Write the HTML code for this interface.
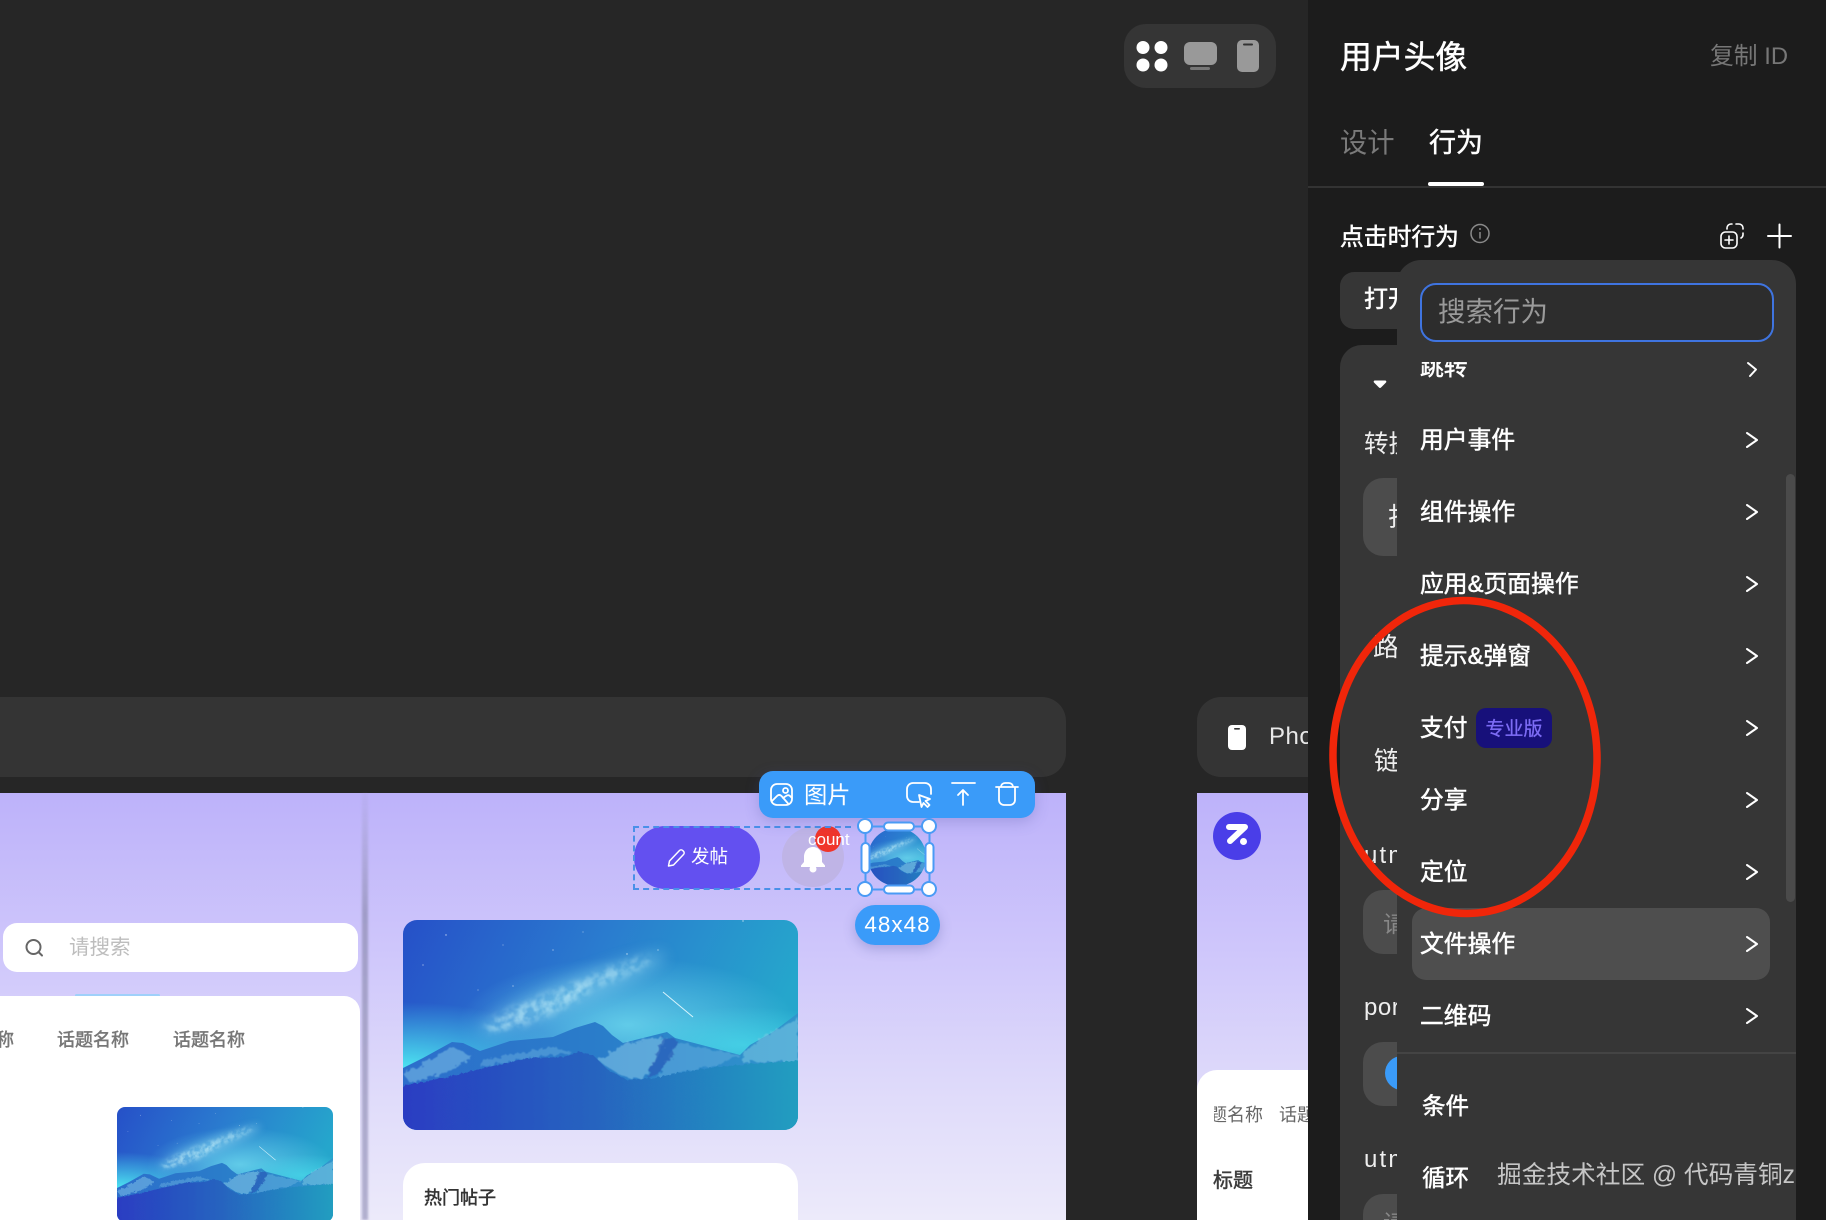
<!DOCTYPE html>
<html lang="zh-CN">
<head>
<meta charset="utf-8">
<title>用户头像</title>
<style>
*{box-sizing:border-box;margin:0;padding:0}
html,body{width:1826px;height:1220px;overflow:hidden;background:#262626}
body{position:relative;font-family:"Liberation Sans","Noto Sans CJK SC",sans-serif;color:#fff}
.a{position:absolute}
.t{position:absolute;white-space:nowrap;line-height:40px;height:40px}
.m{-webkit-text-stroke:.5px currentColor}
.row{position:absolute;left:23px;font-size:23.8px;line-height:40px;height:40px;white-space:nowrap;-webkit-text-stroke:.5px #fff}
svg{position:absolute;left:0;top:0;display:block}
</style>
</head>
<body>
<svg width="0" height="0" style="position:absolute">
<defs>
<linearGradient id="sky" x1="0" y1="0" x2="1" y2=".25"><stop offset="0" stop-color="#2650c8"/><stop offset=".5" stop-color="#2a7ccf"/><stop offset="1" stop-color="#25a6cc"/></linearGradient>
<radialGradient id="gl" cx="0" cy="150" r="170" gradientUnits="userSpaceOnUse" gradientTransform="translate(0 90) scale(1 .4)"><stop offset="0" stop-color="#4ee8f2"/><stop offset="1" stop-color="#4ee8f2" stop-opacity="0"/></radialGradient>
<radialGradient id="gc" cx="225" cy="105" r="170" gradientUnits="userSpaceOnUse" gradientTransform="translate(0 63) scale(1 .4)"><stop offset="0" stop-color="#6fdcef" stop-opacity=".8"/><stop offset="1" stop-color="#6fdcef" stop-opacity="0"/></radialGradient>
<radialGradient id="gr" cx="340" cy="125" r="120" gradientUnits="userSpaceOnUse" gradientTransform="translate(0 85) scale(1 .32)"><stop offset="0" stop-color="#4adcec" stop-opacity=".7"/><stop offset="1" stop-color="#4adcec" stop-opacity="0"/></radialGradient>
<linearGradient id="mt" x1="0" y1="0" x2="1" y2="0"><stop offset="0" stop-color="#2c6ecb"/><stop offset=".5" stop-color="#2a7dca"/><stop offset="1" stop-color="#3095cc"/></linearGradient>
<linearGradient id="tr" x1="0" y1="0" x2="1" y2="0"><stop offset="0" stop-color="#2a3cc2"/><stop offset=".5" stop-color="#2565bf"/><stop offset=".8" stop-color="#2488c0"/><stop offset="1" stop-color="#229fc0"/></linearGradient>
<filter id="b6" x="-30%" y="-80%" width="160%" height="260%"><feGaussianBlur stdDeviation="7"/></filter>
<filter id="cloud" x="-20%" y="-80%" width="140%" height="260%"><feGaussianBlur in="SourceGraphic" stdDeviation="4" result="s"/><feTurbulence type="fractalNoise" baseFrequency=".11" numOctaves="3" seed="8" result="n"/><feColorMatrix in="n" type="matrix" values="0 0 0 0 1 0 0 0 0 1 0 0 0 0 1 3 0 0 0 -1" result="a"/><feComposite in="s" in2="a" operator="in"/><feGaussianBlur stdDeviation=".6"/></filter>
<filter id="rough" x="-5%" y="-5%" width="110%" height="110%"><feTurbulence type="fractalNoise" baseFrequency=".3" numOctaves="2" seed="3" result="n"/><feDisplacementMap in="SourceGraphic" in2="n" scale="3.5"/></filter>
<filter id="rough2" x="-5%" y="-20%" width="110%" height="140%"><feTurbulence type="fractalNoise" baseFrequency=".18" numOctaves="3" seed="5" result="n"/><feDisplacementMap in="SourceGraphic" in2="n" scale="7"/><feGaussianBlur stdDeviation=".5"/></filter>
<symbol id="scene" viewBox="0 0 395 210" preserveAspectRatio="none">
<rect width="395" height="210" fill="url(#sky)"/>
<rect width="395" height="210" fill="url(#gl)"/>
<rect width="395" height="210" fill="url(#gc)"/>
<rect width="395" height="210" fill="url(#gr)"/>
<g transform="rotate(-22 170 71)">
<ellipse cx="170" cy="72" rx="100" ry="14" fill="#8fd8f0" opacity=".4" filter="url(#b6)"/>
<ellipse cx="130" cy="74" rx="55" ry="10" fill="#b8e6f5" opacity=".65" filter="url(#cloud)"/>
<ellipse cx="205" cy="70" rx="50" ry="6" fill="#b8e6f5" opacity=".6" filter="url(#cloud)"/>
</g>
<path d="M260 72L290 97" stroke="#e8fbff" stroke-width="1" opacity=".9"/>
<g fill="#fff" opacity=".7"><circle cx="43" cy="15" r=".7"/><circle cx="20" cy="45" r=".6"/><circle cx="224" cy="34" r=".7"/><circle cx="110" cy="66" r=".6"/><circle cx="255" cy="30" r=".6"/><circle cx="340" cy="1" r=".7"/><circle cx="150" cy="30" r=".6"/><circle cx="75" cy="70" r=".5"/><circle cx="180" cy="12" r=".5"/><circle cx="100" cy="25" r=".5"/></g>
<path d="M0 148L20 138 49 122 60 123 77 131 107 121 150 117 172 108 192 102 200 106 209 115 220 123 240 118 264 112 272 118 337 135 347 125 370 112 395 93V210H0Z" fill="url(#mt)"/>
<g filter="url(#rough2)">
<path d="M0 153L27 140 50 127 70 137 44 152 7 163Z" fill="#8fd0ea" opacity=".45"/>
<path d="M80 140L150 127 170 133 127 138 77 147Z" fill="#8fd0ea" opacity=".3"/>
<path d="M194 140L224 123 264 117 257 133 240 160 220 157Z" fill="#9ad6ee" opacity=".45"/>
<path d="M274 123L337 135 310 147 254 158Z" fill="#6ab4e0" opacity=".45"/>
<path d="M260 117L274 120 270 137 250 157 244 157Z" fill="#2a5cb8" opacity=".7"/>
<path d="M340 133L360 117 395 97V142H339Z" fill="#7cc8e4" opacity=".55"/>
</g>
<path d="M-5 167L44 157 90 146 127 138 160 137 177 132 190 135 205 150 224 160 250 158 280 152 310 147 350 144 400 140V215H-5Z" fill="url(#tr)" filter="url(#rough)"/>
</symbol>
<clipPath id="av"><circle cx="897" cy="857" r="29"/></clipPath>
</defs>
</svg>

<!-- canvas top toolbar -->
<div class="a" style="left:1124px;top:24px;width:152px;height:64px;border-radius:22px;background:#353535"></div>

<!-- left header bar -->
<div class="a" style="left:-30px;top:697px;width:1096px;height:80px;border-radius:24px;background:#343434"></div>
<!-- left preview -->
<div class="a" style="left:0;top:793px;width:1066px;height:427px;background:linear-gradient(180deg,#bdb2fa 0%,#cfc7fb 38%,#e0dcfa 72%,#eceafa 100%)"></div>
<div class="a" style="left:362px;top:793px;width:6px;height:427px;filter:blur(1px);background:linear-gradient(180deg,rgba(160,156,205,.1) 0%,#a09cc8 28%,#a9a6cb 60%,#b2b0cf 100%)"></div>

<!-- left phone -->
<div class="a" style="left:3px;top:923px;width:355px;height:49px;border-radius:14px;background:#fff"></div>
<div class="t" style="left:69px;top:928px;font-size:20.5px;color:#bdbdbd">请搜索</div>
<div class="a" style="left:75px;top:994px;width:85px;height:3px;background:#9fd0fa;border-radius:2px"></div>
<div class="a" style="left:-30px;top:996px;width:390px;height:240px;border-radius:16px;background:#fff"></div>
<div class="t m" style="left:-58px;top:1020px;font-size:18px;color:#777">话题名称</div>
<div class="t m" style="left:57px;top:1020px;font-size:18px;color:#777">话题名称</div>
<div class="t m" style="left:173px;top:1020px;font-size:18px;color:#777">话题名称</div>
<svg style="left:117px;top:1107px;border-radius:8px" width="216" height="115"><use href="#scene" width="216" height="115"/></svg>

<!-- main image -->
<svg style="left:403px;top:920px;border-radius:14px" width="395" height="210"><use href="#scene" width="395" height="210"/></svg>
<div class="a" style="left:403px;top:1163px;width:395px;height:80px;border-radius:22px;background:#fff"></div>
<div class="t m" style="left:424px;top:1178px;font-size:18px;color:#333">热门帖子</div>

<!-- post button & bell -->
<div class="a" style="left:634px;top:826px;width:126px;height:63px;border-radius:32px;background:#6350f0"></div>
<div class="t" style="left:691px;top:837px;font-size:18.5px;color:#fff">发帖</div>
<div class="a" style="left:782px;top:827px;width:62px;height:60px;border-radius:50%;background:#bfb4e6"></div>
<div class="a" style="left:815px;top:826px;width:26px;height:26px;border-radius:50%;background:#f0352a"></div>
<div class="t" style="left:808px;top:820px;font-size:17px;color:#fff">count</div>
<div class="a" style="left:633px;top:826px;width:218px;height:64px;border:2px dashed #4a90e8;border-right:0"></div>

<!-- blue toolbar -->
<div class="a" style="left:759px;top:771px;width:276px;height:47px;border-radius:14px;background:#3a9bf9;box-shadow:0 4px 14px rgba(70,80,160,.25)"></div>
<div class="t" style="left:804px;top:775px;font-size:23.3px;color:#fff">图片</div>
<div class="a" style="left:855px;top:905px;width:85px;height:40px;border-radius:20px;background:#3a9bf9;box-shadow:0 4px 12px rgba(70,80,160,.3)"></div>
<div class="t" style="left:855px;top:905px;width:85px;text-align:center;font-size:22.5px;letter-spacing:1px;color:#fff">48x48</div>

<!-- right phone -->
<div class="a" style="left:1197px;top:697px;width:140px;height:80px;border-radius:24px;background:#343434"></div>
<div class="t" style="left:1269px;top:717px;font-size:24px;letter-spacing:.5px;color:#e8e8e8">Phone</div>
<div class="a" style="left:1197px;top:793px;width:111px;height:427px;background:linear-gradient(180deg,#bdb2fa 0%,#cfc7fb 38%,#e0dcfa 72%,#eceafa 100%)"></div>
<div class="a" style="left:1197px;top:1070px;width:130px;height:170px;border-radius:20px 0 0 0;background:#fff"></div>
<div style="position:absolute;left:1214px;top:1095px;width:94px;height:40px;overflow:hidden">
<div class="t" style="left:-23px;top:0;font-size:18px;color:#666">话题名称</div>
<div class="t" style="left:65px;top:0;font-size:18px;color:#666">话题</div>
</div>
<div class="t m" style="left:1213px;top:1161px;font-size:20px;color:#3c3c3c">标题</div>

<!-- right panel -->
<div class="a" style="left:1308px;top:0;width:518px;height:1220px;background:#1c1c1c"></div>
<div class="t m" style="left:1340px;top:37px;font-size:31.8px;color:#fff">用户头像</div>
<div class="t" style="left:1710px;top:37px;font-size:23.8px;color:#777">复制 ID</div>
<div class="t" style="left:1340px;top:123px;font-size:27.3px;color:#7a7a7a">设计</div>
<div class="t m" style="left:1429px;top:123px;font-size:27px;color:#fff">行为</div>
<div class="a" style="left:1308px;top:186px;width:518px;height:2px;background:#333"></div>
<div class="a" style="left:1428px;top:182px;width:56px;height:4px;border-radius:2px;background:#fff"></div>
<div class="t m" style="left:1340px;top:218px;font-size:23.8px;color:#fff">点击时行为</div>

<!-- behind section -->
<div class="a" style="left:1340px;top:272px;width:100px;height:57px;border-radius:14px;background:#363636"></div>
<div class="t m" style="left:1364px;top:280px;font-size:24px;color:#fff">打开</div>
<div class="a" style="left:1340px;top:345px;width:456px;height:880px;border-radius:22px 22px 0 0;background:#363636"></div>
<div class="t" style="left:1364px;top:425px;font-size:24.5px;color:#eee">转换</div>
<div class="a" style="left:1363px;top:478px;width:60px;height:78px;border-radius:20px;background:#4c4c4c"></div>
<div class="t" style="left:1388px;top:497px;font-size:26px;color:#eee">打</div>
<div class="t" style="left:1373px;top:627px;font-size:26px;color:#eee">路</div>
<div class="t" style="left:1374px;top:741px;font-size:26px;color:#eee">链</div>
<div class="t" style="left:1364px;top:836px;font-size:24px;letter-spacing:2.2px;color:#eee">utm</div>
<div class="a" style="left:1363px;top:890px;width:60px;height:64px;border-radius:20px;background:#4c4c4c"></div>
<div class="t" style="left:1383px;top:904px;font-size:23px;color:#888">请</div>
<div class="t" style="left:1364px;top:988px;font-size:24px;letter-spacing:.5px;color:#eee">port</div>
<div class="a" style="left:1363px;top:1042px;width:60px;height:64px;border-radius:20px;background:#4c4c4c"></div>
<div class="a" style="left:1385px;top:1056px;width:34px;height:34px;border-radius:50%;background:#3a9bf9"></div>
<div class="t" style="left:1364px;top:1140px;font-size:24px;letter-spacing:2.2px;color:#eee">utm</div>
<div class="a" style="left:1363px;top:1194px;width:60px;height:64px;border-radius:20px;background:#4c4c4c"></div>
<div class="t" style="left:1383px;top:1203px;font-size:23px;color:#888">请</div>

<!-- popup -->
<div class="a" style="left:1397px;top:260px;width:399px;height:970px;border-radius:24px 24px 0 0;background:#363636"></div>
<div class="a" style="left:1420px;top:283px;width:354px;height:59px;border-radius:16px;border:2px solid #3f74e0;background:#2d2d2d"></div>
<div class="t" style="left:1438px;top:292px;font-size:27.5px;color:#9a9a9a">搜索行为</div>

<div style="position:absolute;left:1397px;top:362px;width:399px;height:690px;overflow:hidden">
<div class="a" style="left:15px;top:546px;width:358px;height:72px;border-radius:14px;background:#4e4e4e"></div>
<div class="row" style="top:-14px">跳转</div>
<div class="row" style="top:59px">用户事件</div>
<div class="row" style="top:131px">组件操作</div>
<div class="row" style="top:203px">应用&amp;页面操作</div>
<div class="row" style="top:275px">提示&amp;弹窗</div>
<div class="row" style="top:347px">支付</div>
<div class="row" style="top:419px">分享</div>
<div class="row" style="top:491px">定位</div>
<div class="row" style="top:563px">文件操作</div>
<div class="row" style="top:635px">二维码</div>
<div class="a" style="left:79px;top:346px;width:76px;height:40px;border-radius:10px;background:#17107a"></div>
<div class="t m" style="left:79px;top:348px;width:76px;text-align:center;font-size:19px;color:#7d6cf5;-webkit-text-stroke-width:.3px">专业版</div>
</div>
<div class="a" style="left:1786px;top:474px;width:9px;height:428px;border-radius:5px;background:#4b4b4b"></div>
<div class="a" style="left:1397px;top:1052px;width:399px;height:2px;background:#444"></div>
<div class="t m" style="left:1422px;top:1086px;font-size:23.5px;color:#fff">条件</div>
<div class="t m" style="left:1422px;top:1158px;font-size:23.5px;color:#fff">循环</div>
<div style="position:absolute;left:1497px;top:1156px;width:299px;height:40px;overflow:hidden">
<div class="t" style="left:0;top:0;font-size:24.7px;color:#c6c6c6">掘金技术社区 @ 代码青铜z</div>
</div>

<!-- overlay vector icons -->
<svg width="1826" height="1220" viewBox="0 0 1826 1220" fill="none">
<!-- toolbar icons -->
<g fill="#fff"><circle cx="1143" cy="47.5" r="6.5"/><circle cx="1161" cy="47.5" r="6.5"/><circle cx="1143" cy="65" r="6.5"/><circle cx="1161" cy="65" r="6.5"/></g>
<rect x="1184" y="42" width="33" height="23" rx="6" fill="#999"/>
<rect x="1190" y="67" width="20" height="3" rx="1.5" fill="#777"/>
<rect x="1237" y="40" width="22" height="32" rx="5" fill="#999"/>
<rect x="1243" y="43.5" width="10" height="2" rx="1" fill="#333"/>
<!-- phone label icon -->
<rect x="1228" y="725" width="18" height="25" rx="4" fill="#fff"/>
<rect x="1234" y="728" width="6" height="1.6" rx=".8" fill="#333"/>
<!-- logo -->
<circle cx="1237" cy="836" r="24" fill="#4a3ee8"/>
<path d="M1229 827H1245L1230 841" stroke="#fff" stroke-width="6" stroke-linecap="round" stroke-linejoin="round"/>
<circle cx="1243.500" cy="841.500" r="3.500" fill="#fff"/>
<!-- search -->
<circle cx="33.500" cy="947" r="7" stroke="#666" stroke-width="2"/>
<path d="M38.500 952L42 955.500" stroke="#666" stroke-width="2" stroke-linecap="round"/>
<!-- pencil -->
<path d="M668.500 866l1-5 10-10.500a2.300 2.300 0 0 1 3.200 0l.8.800a2.300 2.300 0 0 1 0 3.200l-10 10.500z" stroke="#fff" stroke-width="1.500" stroke-linejoin="round"/>
<!-- bell -->
<path d="M813 847c-6 0-9 5-9 10v5l-3 3.500v1.500h24v-1.500l-3-3.500v-5c0-5-3-10-9-10z" fill="#fff"/>
<circle cx="813" cy="869" r="3.500" fill="#fff"/>
<!-- toolbar white icons -->
<g stroke="#fff" stroke-width="1.800" stroke-linecap="round" stroke-linejoin="round">
<rect x="771" y="784" width="21" height="21" rx="6"/>
<circle cx="785.500" cy="790.500" r="2.500"/>
<path d="M772 801l5-5c1.500-1.500 3-1.500 4.500 0l7 8M783 798l3-2c1.500-1 3-1 4 0l2 2"/>
<path d="M919 802h-6a6 6 0 0 1-6-6v-7a6 6 0 0 1 6-6h12a6 6 0 0 1 6 6v5"/>
<path d="M919 795l11 4-4.500 2 4 4-2 2-4-4-2 4z"/>
<path d="M952 783h23M963 805v-15M958 795l5-5 5 5"/>
<path d="M996 787h22M999 787v13a5 5 0 0 0 5 5h6a5 5 0 0 0 5-5v-13M1001 787a4 4 0 0 1 4-4h4a4 4 0 0 1 4 4"/>
</g>
<!-- avatar -->
<g clip-path="url(#av)"><use href="#scene" x="842" y="828" width="114" height="60"/></g>
<!-- selection -->
<rect x="865.500" y="826.500" width="64" height="63" stroke="#4a9bf5" stroke-width="2"/>
<g fill="#fff" stroke="#4a9bf5" stroke-width="2">
<rect x="884" y="822.500" width="30" height="8" rx="4"/>
<rect x="884" y="885.500" width="30" height="8" rx="4"/>
<rect x="861.500" y="843" width="8" height="30" rx="4"/>
<rect x="925.500" y="843" width="8" height="30" rx="4"/>
<circle cx="865" cy="826" r="7"/><circle cx="929" cy="826" r="7"/><circle cx="865" cy="889" r="7"/><circle cx="929" cy="889" r="7"/>
</g>
<!-- info -->
<circle cx="1480" cy="233.500" r="9" stroke="#8a8a8a" stroke-width="1.500"/>
<path d="M1480 232v6.500" stroke="#8a8a8a" stroke-width="1.500"/>
<circle cx="1480" cy="229" r="1" fill="#8a8a8a"/>
<!-- duplicate -->
<g stroke="#fff" stroke-width="1.600" stroke-linecap="round">
<rect x="1721" y="232" width="16" height="16" rx="4.500"/>
<path d="M1729 236v8M1725 240h8"/>
<path d="M1727 229v-1a4 4 0 0 1 4-4h1M1736 224h3a4 4 0 0 1 4 4v1M1743 233v2a4 4 0 0 1-2 3"/>
<path d="M1768 236h23M1779.500 224.500v23" stroke-width="2"/>
</g>
<!-- triangle -->
<path d="M1375 380.500h10a1.200 1.200 0 0 1 1 2l-5 5a1.500 1.500 0 0 1-2 0l-5-5a1.200 1.200 0 0 1 1-2z" fill="#fff"/>
<!-- chevrons -->
<g stroke="#fff" stroke-width="2" stroke-linecap="round" stroke-linejoin="round">
<path d="M1748 363l8 6.500-6 6.500"/>
<path d="M1747 433l10 7-10 7M1747 505l10 7-10 7M1747 577l10 7-10 7M1747 649l10 7-10 7M1747 721l10 7-10 7M1747 793l10 7-10 7M1747 865l10 7-10 7M1747 937l10 7-10 7M1747 1009l10 7-10 7"/>
</g>
<!-- red ellipse -->
<ellipse cx="1465" cy="757" rx="132" ry="156.500" stroke="#f0260a" stroke-width="7.500" transform="rotate(-2 1465 757)"/>
</svg>
</body>
</html>
